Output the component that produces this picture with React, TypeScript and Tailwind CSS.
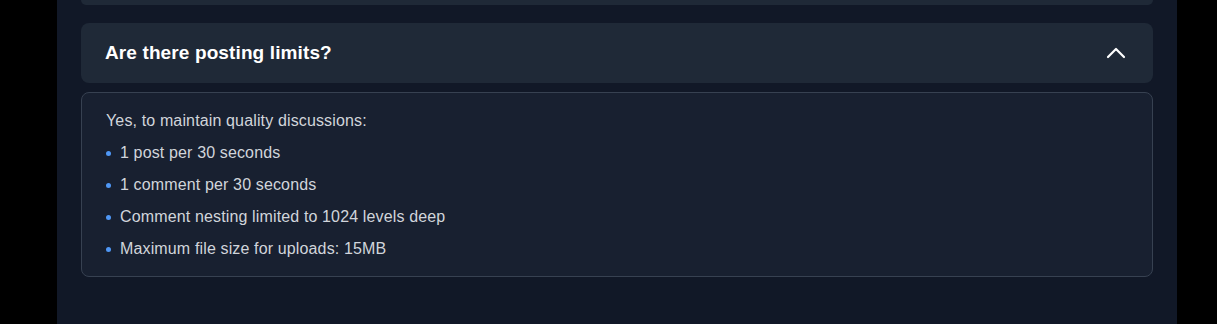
const limits = [
  '1 post per 30 seconds',
  '1 comment per 30 seconds',
  'Comment nesting limited to 1024 levels deep',
  'Maximum file size for uploads: 15MB',
];

export default function App() {
  return (
    <div className="flex h-[324px] w-full overflow-hidden bg-black font-['Liberation_Sans',sans-serif]">
      <main className="ml-[57px] w-[1120px] bg-[#111827] px-6">
        <div className="h-[5px] rounded-b-lg bg-[#1f2937]" />

        <section className="mt-[18px]">
          <button className="flex w-full items-center justify-between rounded-lg bg-[#1f2937] px-6 py-4 text-left">
            <span className="text-[19px] leading-7 font-bold tracking-[0.12px] text-white">Are there posting limits?</span>
            <svg width="24" height="24" viewBox="0 0 24 24" fill="none" stroke="white" strokeWidth="2.2" strokeLinecap="round" strokeLinejoin="round" className="mr-[1px]">
              <path d="M4 16l8-8 8 8" />
            </svg>
          </button>

          <div className="mt-[9px] rounded-lg border border-[#374151] bg-[#182030] px-6 pt-4 pb-[15px] text-base leading-6 tracking-[0.14px] text-[#d1d5db]">
            <p className="mb-2">Yes, to maintain quality discussions:</p>
            <ul className="space-y-2">
              {limits.map((item) => (
                <li key={item} className="flex items-center">
                  <span className="mr-[9px] h-[5px] w-[5px] rounded-full bg-[#4f97f5]" />
                  {item}
                </li>
              ))}
            </ul>
          </div>
        </section>
      </main>
    </div>
  );
}
